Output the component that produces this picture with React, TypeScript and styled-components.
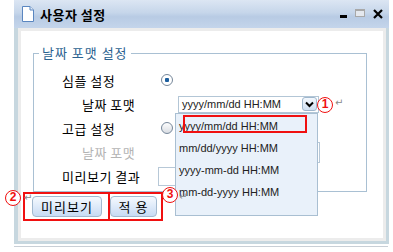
import styled, { createGlobalStyle } from "styled-components";

const GlobalStyle = createGlobalStyle`
  html, body {
    margin: 0;
    padding: 0;
    background: #fff;
  }
  body {
    width: 393px;
    height: 252px;
    overflow: hidden;
    font-family: "Noto Sans CJK KR", "Noto Sans", sans-serif;
  }
`;

const formats = [
  "yyyy/mm/dd HH:MM",
  "mm/dd/yyyy HH:MM",
  "yyyy-mm-dd HH:MM",
  "mm-dd-yyyy HH:MM",
];

// little pictures
const DocIcon = () => (
  <svg width="12" height="16" viewBox="0 0 12 16">
    <path d="M0.5 0.5 H8 L11.5 4 V15.5 H0.5 Z" fill="#fff" stroke="#5a86c0" />
    <path d="M8 0.5 V4 H11.5" fill="#e4ecf6" stroke="#5a86c0" />
  </svg>
);

const CloseIcon = () => (
  <svg width="10" height="10" viewBox="0 0 10 10">
    <path d="M1 1 L9 9 M9 1 L1 9" stroke="#000" strokeWidth="2.2" />
  </svg>
);

const Chevron = () => (
  <svg width="9" height="7" viewBox="0 0 9 7">
    <path d="M1 1.5 L4.5 5 L8 1.5" fill="none" stroke="#000" strokeWidth="2" />
  </svg>
);

export default function App() {
  return (
    <>
      <GlobalStyle />
      <Page>
        <Window>
          <TitleBar>
            <DocIcon />
            <Title>사용자 설정</Title>
            <Controls>
              <MinBtn />
              <MaxBtn />
              <CloseIcon />
            </Controls>
          </TitleBar>
          <Frame>
            <Content>
              <Fieldset>
                <Legend>날짜 포맷 설정</Legend>
                <Rows>
                  <Row>
                    <Label>심플 설정</Label>
                    <Radio $checked />
                  </Row>
                  <Row>
                    <Label $indent>날짜 포맷</Label>
                    <Select>
                      <span>{formats[0]}</span>
                      <DropBtn>
                        <Chevron />
                      </DropBtn>
                    </Select>
                  </Row>
                  <Row>
                    <Label>고급 설정</Label>
                    <Radio />
                  </Row>
                  <Row>
                    <Label $indent $muted>
                      날짜 포맷
                    </Label>
                    <Field $w={142} $h={21} $ml={20} />
                  </Row>
                  <Row>
                    <Label>미리보기 결과</Label>
                    <Field $w={140} $h={19} $ml={0} />
                  </Row>
                </Rows>
              </Fieldset>
              <ButtonRow>
                <Button $w={70}>미리보기</Button>
                <Button $w={47}>적 용</Button>
              </ButtonRow>

              <DropList>
                {formats.map((f) => (
                  <DropItem key={f}>{f}</DropItem>
                ))}
              </DropList>

              {/* red annotations */}
              <RedBox style={{ left: 162, top: 84, width: 124, height: 18 }} />
              <RedBox style={{ left: 2, top: 161, width: 87, height: 29 }} />
              <RedBox style={{ left: 87, top: 161, width: 55, height: 29 }} />
              <Callout style={{ left: 296, top: 66 }}>1</Callout>
              <Callout style={{ left: -16, top: 159 }}>2</Callout>
              <Callout style={{ left: 141, top: 156 }}>3</Callout>
              <Enter style={{ left: 314, top: 66 }}>↵</Enter>
              <Enter style={{ left: 3, top: 161 }}>↵</Enter>
              <Enter style={{ left: 158, top: 160 }}>↵</Enter>
            </Content>
          </Frame>
        </Window>
        <Shadow />
      </Page>
    </>
  );
}

const Page = styled.div`
  padding-left: 14px;
  width: 375px;
`;

const Window = styled.div`
  width: 375px;
  display: flex;
  flex-direction: column;
`;

const TitleBar = styled.div`
  height: 28px;
  box-sizing: border-box;
  display: flex;
  align-items: center;
  padding: 0 6px 0 8px;
  background: linear-gradient(#dce6f3 0%, #c6d6ea 45%, #b8cbe4 60%, #c4d5eb 100%);
`;

const Title = styled.span`
  margin-left: 6px;
  font-size: 13px;
  font-weight: 700;
  color: #000;
  letter-spacing: 0.5px;
`;

const Controls = styled.div`
  margin-left: auto;
  display: flex;
  align-items: center;
  gap: 8px;
  margin-top: -1px;
`;

const MinBtn = styled.span`
  width: 7px;
  height: 3px;
  margin-top: 6px;
  background: #000;
`;

const MaxBtn = styled.span`
  box-sizing: border-box;
  width: 10px;
  height: 8px;
  margin-top: -1px;
  border: 1px solid #a8a8a8;
  border-top-width: 2px;
  background: #e4e8ee;
`;

const Frame = styled.div`
  border-left: 4px solid #c7d7df;
  border-right: 3px solid #c7d7df;
  border-bottom: 3px solid #c7d7df;
`;

const Content = styled.div`
  position: relative;
  box-sizing: border-box;
  height: 213px;
  border: 3px solid #ececec;
  background: #fff;
  padding: 0 16px 0 12px;
`;

const Fieldset = styled.fieldset`
  margin: 14px 0 0 0;
  border: 1px solid #a9c0d3;
  padding: 0 0 3px 0;
  min-width: 0;
`;

const Legend = styled.legend`
  margin-left: 5px;
  padding: 0 3px;
  font-size: 13px;
  line-height: 16px;
  color: #2b6290;
  letter-spacing: 1px;
`;

const Rows = styled.div`
  padding: 7px 0 0 28px;
`;

const Row = styled.div`
  display: flex;
  align-items: center;
  height: 24px;
`;

const Label = styled.span<{ $indent?: boolean; $muted?: boolean }>`
  box-sizing: border-box;
  width: 96px;
  padding-left: ${(p) => (p.$indent ? 20 : 0)}px;
  font-size: 13px;
  letter-spacing: 0.5px;
  color: ${(p) => (p.$muted ? "#b4b4b4" : "#000")};
`;

const Radio = styled.span<{ $checked?: boolean }>`
  box-sizing: border-box;
  width: 12px;
  height: 12px;
  margin-left: 3px;
  border-radius: 50%;
  border: 1px solid #76879a;
  background: ${(p) =>
    p.$checked
      ? "radial-gradient(circle, #1c5e9e 0 2px, #fff 2.5px)"
      : "linear-gradient(#fdfdfd, #d9dde3)"};
`;

const Select = styled.div`
  box-sizing: border-box;
  display: flex;
  align-items: center;
  width: 141px;
  height: 17px;
  margin-left: 20px;
  padding: 0 1px 0 3px;
  border: 1px solid #b3c6d6;
  font-family: "Liberation Sans", Arial, sans-serif;
  font-size: 11px;
  color: #222;
`;

const DropBtn = styled.span`
  box-sizing: border-box;
  margin-left: auto;
  width: 15px;
  height: 14px;
  display: flex;
  align-items: center;
  justify-content: center;
  border: 1px solid #9fb7cd;
  border-radius: 3px;
  background: linear-gradient(#f4f8fd, #cfdff2);
`;

const Field = styled.span<{ $w: number; $h: number; $ml: number }>`
  box-sizing: border-box;
  width: ${(p) => p.$w}px;
  height: ${(p) => p.$h}px;
  margin-left: ${(p) => p.$ml}px;
  border: 1px solid #b7c8d7;
  background: #fff;
`;

const ButtonRow = styled.div`
  display: flex;
  gap: 8px;
  margin: 4px 0 0 -1px;
`;

const Button = styled.button<{ $w: number }>`
  box-sizing: border-box;
  width: ${(p) => p.$w}px;
  height: 21px;
  padding: 0;
  border: 1px solid #a2b9cf;
  border-radius: 4px;
  background: linear-gradient(#f5f9fe, #c7dbf4);
  font-family: "Noto Sans CJK KR", sans-serif;
  font-size: 13px;
  letter-spacing: 1px;
  color: #000;
`;

const DropList = styled.div`
  position: absolute;
  left: 154px;
  top: 82px;
  box-sizing: border-box;
  width: 143px;
  height: 103px;
  padding-top: 1px;
  border: 1px solid #a9bfd2;
  background: #e9f1fa;
  z-index: 2;
`;

const DropItem = styled.div`
  height: 22px;
  line-height: 22px;
  padding-left: 3px;
  font-family: "Liberation Sans", Arial, sans-serif;
  font-size: 11px;
  color: #222;
`;

const RedBox = styled.span`
  position: absolute;
  box-sizing: border-box;
  border: 2px solid #f01010;
  z-index: 3;
`;

const Callout = styled.span`
  position: absolute;
  box-sizing: border-box;
  width: 16px;
  height: 16px;
  border: 1.5px solid #f01010;
  border-radius: 50%;
  background: #fff;
  color: #f01010;
  font-family: "Liberation Sans", Arial, sans-serif;
  font-size: 12px;
  font-weight: 700;
  line-height: 13px;
  text-align: center;
  z-index: 4;
`;

const Enter = styled.span`
  position: absolute;
  font-family: "DejaVu Sans", sans-serif;
  font-size: 10px;
  line-height: 12px;
  color: #8a8a8a;
  z-index: 4;
`;

const Shadow = styled.div`
  margin-top: 2px;
  width: 374px;
  height: 1px;
  background: #c9cfd6;
`;
